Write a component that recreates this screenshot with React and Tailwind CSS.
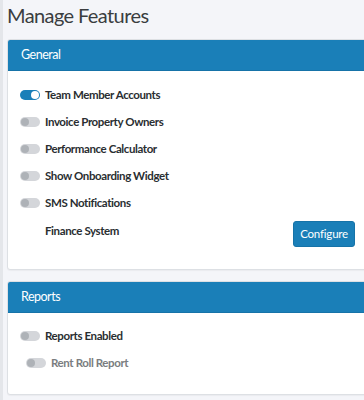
import { useState } from "react";

const font = { fontFamily: '"Lato", "Noto Sans", sans-serif' };

function Toggle({ on }) {
  return (
    <span
      className={
        "relative inline-block h-[10px] w-[20px] shrink-0 rounded-full " +
        (on ? "bg-[#1a7fb8]" : "bg-[#d4d6da]")
      }
    >
      <span
        className={
          "absolute top-[1px] h-[8px] w-[8px] rounded-full " +
          (on ? "right-[1px] bg-white" : "left-[1px] bg-[#aeb2b7]")
        }
      />
    </span>
  );
}

function FeatureRow({ label, on, muted, indent }) {
  return (
    <div className={"flex h-[27px] items-center gap-[5px] " + (indent ? "pl-[6px]" : "")}>
      <Toggle on={on} />
      <span
        className={
          "text-[11.5px] font-bold tracking-[-0.4px] " +
          (muted ? "text-[#7a7d80]" : "text-[#2a2e31]")
        }
      >
        {label}
      </span>
    </div>
  );
}

function Card({ title, children, className }) {
  return (
    <div
      className={
        "-mr-3 overflow-hidden rounded-[3px] border border-[#dde0e4] bg-white shadow-[0_1px_1px_rgba(0,0,0,0.04)] " +
        (className || "")
      }
    >
      <div className="flex h-[31px] items-center border-b border-[#1673a8] bg-[#1a7fb8] px-[13px] text-[12.5px] tracking-[-0.5px] text-white">
        {title}
      </div>
      {children}
    </div>
  );
}

export default function App() {
  const [features] = useState([
    { label: "Team Member Accounts", on: true },
    { label: "Invoice Property Owners", on: false },
    { label: "Performance Calculator", on: false },
    { label: "Show Onboarding Widget", on: false },
    { label: "SMS Notifications", on: false },
  ]);

  return (
    <div className="flex min-h-[400px] overflow-hidden bg-[#f4f5f9]" style={font}>
      <div className="w-[3px] shrink-0 bg-[#e4e6ea]" />
      <div className="flex-1 pl-[4px]">
        <h1 className="h-[39px] pt-[1px] text-[20px] leading-[28px] tracking-[-0.6px] text-[#3a3d40]">
          Manage Features
        </h1>

        <Card title="General">
          <div className="px-[12px] pb-[22px] pt-[10px]">
            {features.map((f) => (
              <FeatureRow key={f.label} label={f.label} on={f.on} />
            ))}
            <div className="flex items-start justify-between pr-[8px]">
              <span className="h-[27px] pl-[25px] pt-[1px] text-[11.5px] font-bold leading-[27px] tracking-[-0.4px] text-[#2a2e31]">
                Finance System
              </span>
              <button className="mt-[5px] h-[26px] rounded-[3px] border border-[#1673a8] bg-[#1a7fb8] px-[6px] text-[11.5px] tracking-[-0.2px] text-white">
                Configure
              </button>
            </div>
          </div>
        </Card>

        <Card title="Reports" className="mt-[11px]">
          <div className="px-[12px] pb-[18px] pt-[9px]">
            <FeatureRow label="Reports Enabled" on={false} />
            <FeatureRow label="Rent Roll Report" on={false} muted indent />
          </div>
        </Card>
      </div>
    </div>
  );
}
